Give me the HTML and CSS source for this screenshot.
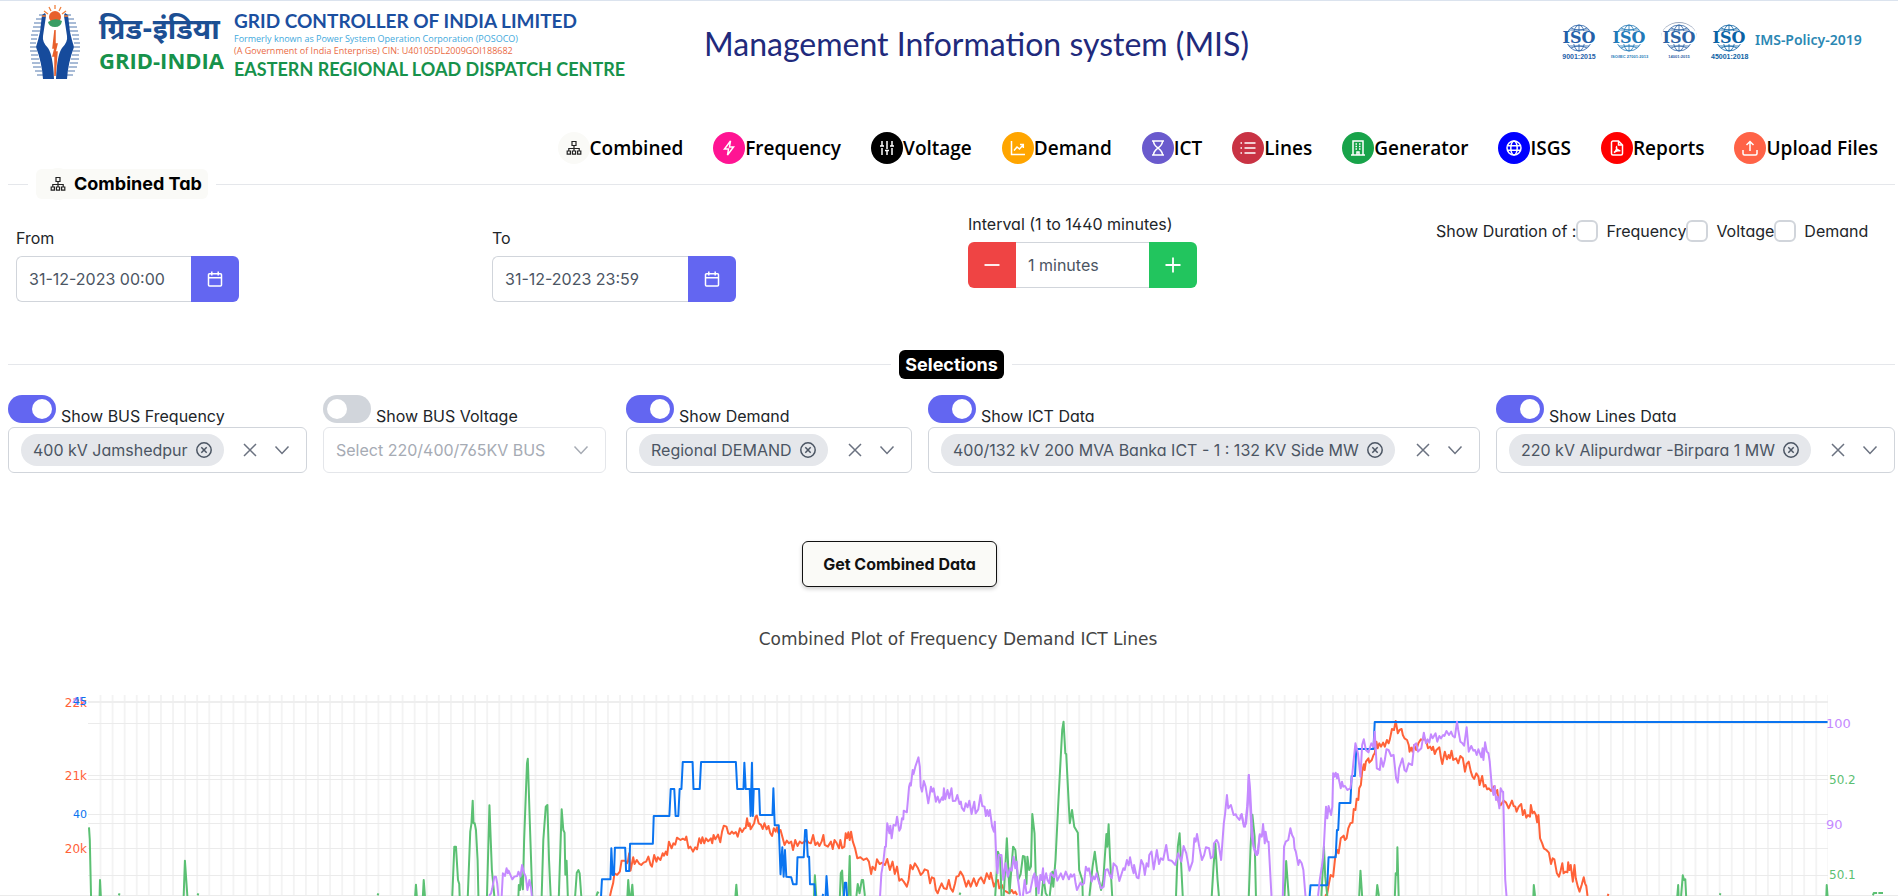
FILE: index.html
```html
<!DOCTYPE html>
<html lang="en">
<head>
<meta charset="utf-8">
<title>Management Information system (MIS)</title>
<link rel="stylesheet" href="styles.css">
</head>
<body>
<svg class="sprite" aria-hidden="true">
  <symbol id="i-sitemap" viewBox="0 0 16 16"><path d="M6 1.5h4v4H6zM8 5.500v3M2.800 11V8.500h10.400V11M8 8.500V11M1.200 11h3.200v3.200H1.200zM6.400 11h3.200v3.200H6.400zM11.600 11h3.200v3.200h-3.200z"/></symbol>
  <symbol id="i-bolt" viewBox="0 0 16 16"><path d="M9.500 1 3.500 9h4l-1 6 6-8h-4z"/></symbol>
  <symbol id="i-sliders" viewBox="0 0 16 16"><path d="M3 1v5M3 8v7M1 6h4M8 1v8M8 11v4M6 10.500h4M13 1v5M13 8v7M11 6h4"/></symbol>
  <symbol id="i-chart" viewBox="0 0 16 16"><path d="M1.500 1v13.500H15M4 10.500l3-3.500 2.500 2L13 5M10 4.500h3.300V8"/></symbol>
  <symbol id="i-hourglass" viewBox="0 0 16 16"><path d="M2 1h12M2 15h12M3.500 1c0 4 2.500 5.500 4.500 7-2 1.500-4.500 3-4.500 7M12.500 1c0 4-2.500 5.500-4.500 7 2 1.500 4.500 3 4.500 7"/></symbol>
  <symbol id="i-list" viewBox="0 0 16 16"><path d="M4.500 3h11M4.500 8h11M4.500 13h11M.5 3H2M.5 8H2M.5 13H2"/></symbol>
  <symbol id="i-building" viewBox="0 0 16 16"><path d="M3 15V1h10v14M1 15h14M7 15v-3h2v3M5.500 4h1.500M9 4h1.500M5.500 6.500h1.500M9 6.500h1.500M5.500 9h1.500M9 9h1.500"/></symbol>
  <symbol id="i-globe" viewBox="0 0 16 16"><circle cx="8" cy="8" r="7"/><ellipse cx="8" cy="8" rx="3.200" ry="7"/><path d="M1.500 5.700h13M1.500 10.300h13"/></symbol>
  <symbol id="i-pdf" viewBox="0 0 16 16"><path d="M9.500 1H4a1.500 1.500 0 0 0-1.500 1.500v11A1.500 1.500 0 0 0 4 15h8a1.500 1.500 0 0 0 1.500-1.500V5zM9.500 1v4h4M5 12.500c2-1 3-4 2.500-5.500-.8 1 1.500 4 3.800 3.700-2-.4-4 .2-6.300 1.800z"/></symbol>
  <symbol id="i-upload" viewBox="0 0 16 16"><path d="M8 11V1.500M4.500 5 8 1.500 11.500 5M1 10v3.500A1.500 1.500 0 0 0 2.500 15h11a1.500 1.500 0 0 0 1.500-1.500V10"/></symbol>
  <symbol id="i-calendar" viewBox="0 0 16 16"><path d="M2.500 2.700h11a1 1 0 0 1 1 1v10.300a1 1 0 0 1-1 1h-11a1 1 0 0 1-1-1V3.700a1 1 0 0 1 1-1zM1.500 6.700h13M4.800.5v4M11.200.5v4"/></symbol>
  <symbol id="i-minus" viewBox="0 0 16 16"><path d="M.5 8h15"/></symbol>
  <symbol id="i-plus" viewBox="0 0 16 16"><path d="M.5 8h15M8 .5v15"/></symbol>
  <symbol id="i-times" viewBox="0 0 16 16"><path d="M2 2l12 12M14 2 2 14"/></symbol>
  <symbol id="i-down" viewBox="0 0 16 16"><path d="M1.500 4.500 8 11.500l6.500-7"/></symbol>
  <symbol id="i-remove" viewBox="0 0 16 16"><circle cx="8" cy="8" r="7.200"/><path d="M5.300 5.300l5.400 5.400M10.700 5.300l-5.400 5.400"/></symbol>
  <symbol id="i-iso" viewBox="0 0 34 30"><g fill="none" stroke="currentColor" stroke-width=".8"><circle cx="17" cy="15" r="13"/><ellipse cx="17" cy="15" rx="6" ry="13"/><path d="M17 2v26M7 7h20M7 23h20M9 5q8 4 16 0M9 25q8-4 16 0"/></g><path d="M0 8h34v13H0z" fill="#fff" stroke="none"/></symbol>
</svg>

<header class="banner">
  <div class="brand">
    <svg class="emblem" viewBox="0 0 50 74" aria-hidden="true">
      <g stroke="#5378ae" stroke-width="1"><path d="M9 10h7M6 14h9M4 18h9M3 22h8M2 26h8M1 30h7M1 34h6M0 38h6M0 42h6M0 46h7M1 50h7M1 54h8M2 58h8M3 62h8M5 66h7M7 70h6M34 10h7M35 14h9M37 18h9M39 22h8M40 26h8M42 30h7M43 34h6M44 38h6M44 42h6M43 46h7M42 50h7M41 54h8M40 58h8M39 62h8M38 66h7M37 70h6"/></g>
      <path d="M12 10l3-2 1 3-3 20q-1 6 5 12 5 7 6 31H13Q12 58 6 42 8 36 10 27zM38 10l-3-2-1 3 3 20q1 6-5 12-5 7-6 31h11q1-16 7-32-2-6-4-15z" fill="#164b9c"/>
      <circle cx="25" cy="12" r="6" fill="#e8602c"/>
      <path d="M25 0v4M19 2l2 4M31 2l-2 4M14 6l4 3M36 6l-4 3M12 11h4M34 11h4" stroke="#f0813e" stroke-width="1.300"/>
      <path d="M18 17q7-5 14-1-1 6-7 6t-7-5z" fill="#3a9d64"/>
      <path d="M25 25l-2 18h2l-2 8h2l0 20 2-24h-2l2-8h-2z" fill="#e8602c" stroke="#e8602c"/>
    </svg>
    <div class="brand-name"><span class="hindi" lang="hi">ग्रिड-इंडिया</span><span class="latin">GRID-INDIA</span></div>
    <div class="org">
      <span class="org-main">GRID CONTROLLER OF INDIA LIMITED</span>
      <span class="org-former">Formerly known as Power System Operation Corporation (POSOCO)</span>
      <span class="org-cin">(A Government of India Enterprise) CIN: U40105DL2009GOI188682</span>
      <span class="org-centre">EASTERN REGIONAL LOAD DISPATCH CENTRE</span>
    </div>
  </div>
  <h1 class="title">Management Information system (MIS)</h1>
  <div class="certs">
    <div class="iso"><span class="mark"><svg><use href="#i-iso"/></svg><b>ISO</b></span><small>9001:2015</small></div>
    <div class="iso mid"><span class="mark"><svg><use href="#i-iso"/></svg><b>ISO</b></span><small class="tiny">ISO/IEC 27001:2013</small></div>
    <div class="iso ring"><span class="mark"><svg><use href="#i-iso"/></svg><b>ISO</b></span><small class="tiny">14001:2015</small></div>
    <div class="iso deep"><span class="mark"><svg><use href="#i-iso"/></svg><b>ISO</b></span><small>45001:2018</small></div>
    <a class="policy" href="#">IMS-Policy-2019</a>
  </div>
</header>

<nav class="tabs">
  <a href="#" class="tab first"><span class="dot pale"><svg><use href="#i-sitemap"/></svg></span>Combined</a>
  <a href="#" class="tab"><span class="dot pink"><svg><use href="#i-bolt"/></svg></span>Frequency</a>
  <a href="#" class="tab"><span class="dot black"><svg><use href="#i-sliders"/></svg></span>Voltage</a>
  <a href="#" class="tab"><span class="dot amber"><svg><use href="#i-chart"/></svg></span>Demand</a>
  <a href="#" class="tab"><span class="dot violet"><svg><use href="#i-hourglass"/></svg></span>ICT</a>
  <a href="#" class="tab"><span class="dot crimson"><svg><use href="#i-list"/></svg></span>Lines</a>
  <a href="#" class="tab"><span class="dot green"><svg><use href="#i-building"/></svg></span>Generator</a>
  <a href="#" class="tab"><span class="dot blue"><svg><use href="#i-globe"/></svg></span>ISGS</a>
  <a href="#" class="tab"><span class="dot red"><svg><use href="#i-pdf"/></svg></span>Reports</a>
  <a href="#" class="tab"><span class="dot tomato"><svg><use href="#i-upload"/></svg></span>Upload Files</a>
</nav>

<main>
  <div class="divider left"><h2 class="tab-title"><span class="dot pale"><svg><use href="#i-sitemap"/></svg></span>Combined Tab</h2></div>

  <form class="filters">
    <div class="field date">
      <label for="from">From</label>
      <div class="group from"><input id="from" type="text" value="31-12-2023 00:00"><button type="button" class="act indigo" aria-label="Choose date"><svg><use href="#i-calendar"/></svg></button></div>
    </div>
    <div class="field date">
      <label for="to">To</label>
      <div class="group to"><input id="to" type="text" value="31-12-2023 23:59"><button type="button" class="act indigo" aria-label="Choose date"><svg><use href="#i-calendar"/></svg></button></div>
    </div>
    <div class="field">
      <label for="interval">Interval (1 to 1440 minutes)</label>
      <div class="group step"><button type="button" class="act minus" aria-label="Decrease"><svg><use href="#i-minus"/></svg></button><input id="interval" type="text" value="1 minutes"><button type="button" class="act plus" aria-label="Increase"><svg><use href="#i-plus"/></svg></button></div>
    </div>
    <div class="durations">
      <span>Show Duration of :</span>
      <input type="checkbox" id="d-f"><label for="d-f">Frequency</label>
      <input type="checkbox" id="d-v"><label for="d-v">Voltage</label>
      <input type="checkbox" id="d-d"><label for="d-d">Demand</label>
    </div>
  </form>

  <div class="divider"><h2 class="badge">Selections</h2></div>

  <section class="selections">
    <div class="pick">
      <div class="switch-row"><input type="checkbox" class="switch" id="s1" checked><label for="s1">Show BUS Frequency</label></div>
      <div class="multi"><span class="chip">400 kV Jamshedpur<button type="button" aria-label="Remove"><svg><use href="#i-remove"/></svg></button></span><button type="button" class="clear" aria-label="Clear"><svg><use href="#i-times"/></svg></button><button type="button" aria-label="Open list"><svg><use href="#i-down"/></svg></button></div>
    </div>
    <div class="pick">
      <div class="switch-row"><input type="checkbox" class="switch" id="s2"><label for="s2">Show BUS Voltage</label></div>
      <div class="multi off"><select disabled aria-label="BUS Voltage"><option>Select 220/400/765KV BUS</option></select><svg><use href="#i-down"/></svg></div>
    </div>
    <div class="pick">
      <div class="switch-row"><input type="checkbox" class="switch" id="s3" checked><label for="s3">Show Demand</label></div>
      <div class="multi"><span class="chip">Regional DEMAND<button type="button" aria-label="Remove"><svg><use href="#i-remove"/></svg></button></span><button type="button" class="clear" aria-label="Clear"><svg><use href="#i-times"/></svg></button><button type="button" aria-label="Open list"><svg><use href="#i-down"/></svg></button></div>
    </div>
    <div class="pick">
      <div class="switch-row"><input type="checkbox" class="switch" id="s4" checked><label for="s4">Show ICT Data</label></div>
      <div class="multi"><span class="chip">400/132 kV 200 MVA Banka ICT - 1 : 132 KV Side MW<button type="button" aria-label="Remove"><svg><use href="#i-remove"/></svg></button></span><button type="button" class="clear" aria-label="Clear"><svg><use href="#i-times"/></svg></button><button type="button" aria-label="Open list"><svg><use href="#i-down"/></svg></button></div>
    </div>
    <div class="pick">
      <div class="switch-row"><input type="checkbox" class="switch" id="s5" checked><label for="s5">Show Lines Data</label></div>
      <div class="multi"><span class="chip">220 kV Alipurdwar -Birpara 1 MW<button type="button" aria-label="Remove"><svg><use href="#i-remove"/></svg></button></span><button type="button" class="clear" aria-label="Clear"><svg><use href="#i-times"/></svg></button><button type="button" aria-label="Open list"><svg><use href="#i-down"/></svg></button></div>
    </div>
  </section>

  <div class="submit"><button type="button">Get Combined Data</button></div>

  <h3 class="plot-title">Combined Plot of Frequency Demand ICT Lines</h3>
</main>

<svg class="plot" viewBox="0 0 1898 216" role="img" aria-label="Combined plot">
  <defs><pattern id="cols" x="94" y="0" width="12.083" height="216" patternUnits="userSpaceOnUse"><path d="M6.500 0V216" stroke="#e9e9e9"/></pattern></defs>
  <path d="M94 15H1828V216H94z" fill="url(#cols)"/>
  <path d="M88 22H1828" stroke="#eee" stroke-width="2"/>
  <path d="M88 43.500H1828M88 95.500H1828M88 99.500H1828M88 134.500H1828M88 143.500H1828M88 168.500H1828M88 195.500H1828M0 215.500H1898" stroke="#ebebeb"/>

  <g class="line orange">
    <path transform="translate(560) scale(.4464 .3333)" d="M112 648L115 630 119 610 122 580 128 585 134 575 138 542 146 542 150 550 152 545 155 520 158 572 164 532 167 552 172 540 178 552 182 555 187 548 193 545 198 530 203 555 206 560 211 525 216 545 219 532 225 540 230 520 233 527 237 515 240 525 244 485 250 505 254 490 258 494 262 473 270 480 275 476 280 480 283 470 288 505 292 500 298 515 303 502 307 508 312 475 316 490 319 472 323 490 327 475 332 484 338 475 341 490 344 465 348 478 354 464 359 487 363 455 367 437 373 440 377 460 381 462 385 455 389 461 394 456 398 470 403 445 408 456 413 445 416 444 419 415 422 438 425 430 427 448 435 430 438 410 441 407 445 430 450 434 454 447 458 430 463 448 467 438 471 460 475 468 479 445 483 455 486 442 489 458 494 450 499 475 503 495 508 482 513 490 518 485 522 510 527 480 532 498 537 485 542 490 548 485 552 480 557 488 562 490 567 465 572 495 577 487 581 498 586 485 590 465 593 495 600 500 607 485 611 507 615 480 620 490 625 505 628 480 632 505 637 500 640 460 643 475 646 457 649 480 652 455 656 485 661 505 666 535 673 532 680 540 687 535 692 545 697 582 700 560 706 570 710 538 716 552 722 548 728 555 733 537 739 570 745 545 750 582 755 560 760 602 765 597 770 605 777 620 781 600 785 555 790 568 795 550 802 565 808 585 813 578 817 568 824 572 829 610 833 592 838 595 842 630 846 640 850 625 855 610 860 625 866 627 871 600 875 625 880 635 885 610 888 590 893 588 897 575 903 588 910 620 915 602 920 620 927 595 933 618 938 600 943 592 950 610 956 580 962 597 965 578 972 620 977 605 981 600 984 625 990 615 995 632 1000 635 1006 640 1012 630 1016 640 1020 635 1024 645"/>
    <path transform="translate(1240) scale(.4197 .3333)" d="M203 648L208 640 212 610 216 585 222 590 227 530 232 510 235 520 240 475 247 467 250 480 254 475 258 445 263 430 268 428 271 387 275 390 278 356 282 360 284 325 288 315 291 275 295 253 297 270 300 245 306 235 308 248 314 240 318 225 321 220 325 185 328 205 332 190 336 200 341 188 345 200 350 180 354 190 357 178 362 147 367 150 371 123 376 160 380 150 385 147 388 165 392 175 398 180 402 195 404 215 408 203 411 215 415 195 420 210 425 190 431 178 435 180 440 175 445 190 448 205 453 200 457 210 460 200 464 222 468 210 475 202 479 235 482 252 488 215 493 238 497 225 500 235 504 212 508 240 515 235 520 250 525 228 531 235 536 275 540 252 545 245 550 275 554 290 558 297 563 280 568 290 571 315 577 288 581 320 585 315 589 328 593 325 598 333 602 325 606 318 609 340 613 330 616 365 621 376 628 362 634 368 640 385 648 362 652 378 656 380 659 395 664 380 670 372 674 405 678 390 682 413 686 405 691 410 693 375 697 400 701 395 705 405 708 427 711 405 715 475 720 490 724 505 730 510 736 518 741 552 745 535 749 538 755 580 760 590 764 572 768 550 771 580 776 575 780 577 782 547 785 570 788 555 793 605 797 555 800 595 805 620 809 635 814 615 819 592 822 610 825 618 828 648M876 648L878 642"/>
  </g>
  <g class="line green">
    <path transform="scale(.4082 .3333)" d="M218 442L220 480 223 648M244 648L245 600 247 648M291 646L293 640M450 648L453 542 459 648M484 646L486 640M925 646L927 640M1017 648L1019 614 1021 648M1036 648L1038 600 1041 648M1108 648L1113 500 1117 500 1122 600 1125 612 1126 648M1146 648L1152 455 1155 430 1158 362 1160 430 1163 430 1166 450 1170 540 1172 648M1193 648L1199 376 1205 570 1211 648M1270 648L1271 615 1274 630 1276 580 1281 628 1284 480 1291 250 1293 236 1298 430 1304 648M1327 648L1331 480 1337 380 1341 375 1345 540 1349 648M1369 648L1376 388 1380 450 1383 458 1385 584 1388 542 1391 648M1409 648L1413 578 1417 570 1420 580 1424 648M1461 648L1464 637 1467 640M1537 648L1539 600 1542 648M1546 648L1549 614 1551 648"/>
    <path transform="translate(560) scale(.4464 .3333)" d="M393 648L395 614 397 648M569 648L571 586 574 648M627 648L629 580 632 572 635 648M646 648L649 528 651 648M664 648L667 612 671 640 676 600 679 600 683 648M895 645L897 638M975 648L981 515 986 535 989 648M994 648L1001 475 1007 640 1015 500 1020 510 1026 600 1032 582 1037 528 1041 530 1045 612 1047 530 1051 570 1055 560 1058 402 1063 460 1067 648M1079 648L1083 590 1088 640 1092 648M1097 648L1103 575 1105 620 1110 540 1117 350 1125 150 1128 125 1132 220 1134 222 1140 380 1142 430 1147 390 1152 440 1160 458 1163 570 1170 600 1171 648M1186 648L1193 560 1198 515 1203 570 1212 630 1217 600 1224 462 1226 500 1229 433 1232 530 1237 648M1380 648L1384 500 1388 460 1395 648M1460 648L1464 560 1468 490 1473 600 1476 648M1543 648L1547 500 1551 404 1556 470 1559 648"/>
    <path transform="translate(1240) scale(.4197 .3333)" d="M106 648L110 543 116 648M194 648L200 500 203 590 208 648M284 648L287 572 291 648M325 648L327 615 331 648M369 648L371 580 374 585 375 502 378 648M699 648L700 615 703 648M1042 648L1044 615 1045 648M1051 648L1055 586 1058 600 1061 598 1063 648M1143 645L1145 640M1397 648L1398 615 1400 648M1508 646L1510 639 1518 639M1521 639L1532 639"/>
  </g>
  <g class="line blue">
    <path transform="translate(560) scale(.4464 .3333)" d="M92 648L94 598 113 598 115 505 118 585 121 585 123 503 146 503 148 573 155 573 157 491 208 491 210 408 245 408 248 327 256 327 259 408 265 408 268 327 272 327 275 246 297 246 299 327 313 327 316 246 394 246 397 327 411 327 413 248 416 327 425 327 427 408 430 248 432 408 434 327 446 327 448 405 476 405 478 325 481 436 490 436 494 583 498 502 501 590 504 510 507 590 518 592 522 613 530 613 532 532 546 532 549 450 552 450 555 530 558 530 560 613 570 613 572 648M588 648L590 642M595 648L597 588 600 648M636 648L638 608 641 608 643 648"/>
    <path transform="translate(1240) scale(.4197 .3333)" d="M166 648L168 616 208 616 211 532 228 532 231 450 234 450 237 369 263 369 266 288 274 288 277 207 318 207 321 126 1400 126"/>
  </g>
  <g class="line purple">
    <path transform="scale(.4082 .3333)" d="M1198 648L1203 640 1206 625 1211 590 1215 590 1218 610 1221 648M1229 648L1232 580 1237 588 1241 565 1244 580 1246 572 1255 598 1260 590 1267 588 1270 575 1275 590 1279 555 1284 580 1288 590 1292 630 1297 600 1301 625 1303 648"/>
    <path transform="translate(560) scale(.4464 .3333)" d="M717 648L720 580 724 550 728 500 730 500 733 430 738 460 740 437 743 475 747 435 752 437 755 410 760 452 763 445 766 415 769 418 770 392 777 397 782 320 784 310 786 317 790 270 792 282 796 260 803 232 806 260 808 320 811 335 815 303 819 320 825 370 831 320 834 335 837 325 842 365 846 350 850 368 856 352 858 360 860 325 863 358 868 330 872 355 877 325 880 363 886 362 890 345 895 372 898 365 900 383 905 393 909 370 913 382 917 362 922 402 928 365 931 400 937 388 942 345 946 378 951 380 954 408 957 390 960 408 963 390 968 440 972 455 974 425 978 560 980 580 983 525 989 525 993 600 998 550 1003 590 1008 565 1012 572 1016 530 1020 565 1023 545 1026 600 1031 648M1037 648L1041 600 1045 640 1053 635 1060 590 1063 580 1066 620 1069 590 1072 640 1076 585 1079 600 1082 565 1084 610 1089 580 1092 600 1096 610 1099 580 1103 585 1107 592 1110 570 1114 602 1122 580 1127 598 1133 575 1140 598 1144 583 1147 590 1152 583 1155 610 1158 630 1166 608 1169 615 1174 610 1178 560 1182 572 1185 565 1191 605 1195 590 1198 598 1202 580 1207 605 1212 625 1218 620 1222 570 1227 568 1233 590 1236 595 1240 550 1247 560 1253 603 1262 565 1265 570 1270 540 1274 556 1277 532 1281 560 1285 580 1286 555 1292 592 1296 595 1302 540 1307 555 1310 585 1314 550 1318 560 1320 525 1325 515 1330 568 1337 510 1342 552 1346 535 1351 540 1358 495 1363 540 1370 542 1378 555 1385 520 1392 545 1397 498 1403 520 1410 572 1417 545 1421 475 1424 485 1427 462 1432 500 1438 540 1443 525 1447 502 1454 505 1458 535 1463 530 1465 490 1471 480 1475 490 1481 540 1487 430 1490 400 1494 345 1497 385 1503 375 1509 405 1514 403 1516 410 1522 420 1527 403 1532 440 1537 430 1541 370 1543 285 1546 330 1550 440 1554 500 1559 515 1562 525 1568 460"/>
    <path transform="translate(1240) scale(.4197 .3333)" d="M0 410L4 402 8 430 12 440 17 380 21 285 24 370 28 470 33 505 38 525 43 520 47 465 52 470 55 432 59 490 61 455 65 485 68 485 75 648M102 648L105 500 109 485 115 480 120 445 124 465 128 475 130 505 133 515 139 555 142 540 147 550 151 570 156 648M186 648L190 600 195 560 199 520 203 420 205 380 208 415 211 378 217 405 220 380 222 280 225 290 228 278 231 295 233 282 240 325 243 305 246 320 250 318 256 330 263 325 267 290 270 250 275 190 281 220 287 290 291 195 295 178 300 210 306 217 313 190 318 200 321 155 323 200 326 265 333 270 336 235 341 260 345 240 349 208 354 210 360 228 366 225 372 295 376 308 379 265 387 235 392 270 396 275 402 250 410 255 415 195 420 190 424 215 432 205 438 158 443 190 447 178 451 188 455 163 459 175 466 160 470 185 475 168 479 175 484 165 487 168 492 153 498 165 503 155 507 168 512 172 517 125 520 150 525 185 530 190 534 197 540 142 545 215 551 198 556 212 560 210 564 225 568 208 575 232 578 205 580 240 584 187 588 215 592 220 595 245 600 320 604 345 607 318 610 360 614 350 618 385 621 325 625 335 627 335 629 450 632 600 635 648"/>
  </g>
  <g class="ticks">
    <text class="t-orange end" x="87" y="27">22k</text><text class="t-purple small end" x="86" y="25">45</text><text class="t-blue small end" x="87" y="25">45</text>
    <text class="t-orange end" x="87" y="100">21k</text><text class="t-blue small end" x="87" y="138">40</text><text class="t-orange end" x="87" y="173">20k</text>
    <text class="t-purple big" x="1826" y="48">100</text><text class="t-green" x="1829" y="104">50.2</text>
    <text class="t-purple big" x="1826" y="149">90</text><text class="t-green" x="1829" y="199">50.1</text>
  </g>
</svg>
</body>
</html>
```
FILE: styles.css
```css
* { box-sizing: border-box; }
body {
  margin: 0;
  overflow-x: hidden;
  border-top: 1px solid #dbe3ee;
  background: #fff;
  color: #212529;
  font: 16px/24px Inter, "Noto Sans", sans-serif;
  font-feature-settings: "cv02", "cv03", "cv04", "cv11";
}
h1, h2, h3 { margin: 0; }
a { color: inherit; text-decoration: none; }
button, input, select { font: inherit; font-feature-settings: inherit; }
button { border: 0; padding: 0; background: none; color: inherit; cursor: pointer; }
.sprite { display: none; }
svg { display: block; fill: none; stroke: currentColor; stroke-width: 1.5; }
svg use { overflow: visible; }

.banner {
  display: grid;
  grid-template-columns: 704fr 857fr 337fr;
  align-items: start;
  height: 114px;
}
.brand { display: flex; padding: 4px 0 0 30px; }
.emblem { width: 50px; height: 74px; flex: none; margin-right: 19px; stroke: none; }
.brand-name { display: flex; flex-direction: column; width: 124px; margin-right: 11px; padding-top: 10px; white-space: nowrap; font-weight: 700; }
.hindi { font-family: "Noto Sans Devanagari", "Noto Sans", sans-serif; font-size: 29px; line-height: 34px; color: #1c4f93; }
.latin { font-family: "Open Sans", sans-serif; font-size: 22px; line-height: 22px; color: #17924b; }
.org { display: flex; flex-direction: column; white-space: nowrap; font-family: "Open Sans", sans-serif; }
.org-main { padding-top: 3px; font: 700 19px/25px Lato, sans-serif; color: #1b4fa0; }
.org-former { font-size: 9px; line-height: 12px; color: #3fa9dc; }
.org-cin { font-size: 9px; line-height: 12px; color: #ea6b45; }
.org-centre { font: 700 18px/24px Lato, sans-serif; color: #17924b; }
.title { padding-top: 22px; font: 400 32px/42px Lato, sans-serif; color: #212a7c; white-space: nowrap; }
.certs { display: flex; align-items: flex-start; gap: 14px; padding-top: 21px; }
.iso { width: 36px; color: #2460a8; text-align: center; }
.iso.mid { color: #2279b8; }
.iso.ring { color: #2b62a4; }
.iso.ring .mark { border-top: 1px solid #9aa7bd; border-radius: 50%; }
.iso.deep { color: #0b62a4; }
.mark { display: grid; height: 31px; place-items: center; }
.mark > * { grid-area: 1 / 1; }
.mark svg { width: 34px; height: 30px; }
.mark b { position: relative; font: 700 16px/16px "DejaVu Serif", serif; }
.iso small { display: block; font: 700 7px/8px "Liberation Sans", sans-serif; white-space: nowrap; }
.iso small.tiny { font-size: 4px; }
.policy { margin-left: -6px; padding-top: 8px; font: 600 14px/20px "Noto Sans", sans-serif; color: #2b87b3; white-space: nowrap; }

.tabs { display: flex; justify-content: flex-end; gap: 30px; padding: 17px 20px 0 0; }
.tab { display: flex; align-items: center; font: 600 19px/32px "Open Sans", sans-serif; color: #000; white-space: nowrap; }
.dot { display: grid; place-items: center; width: 32px; height: 32px; border-radius: 50%; color: #fff; }
.dot svg { width: 16px; height: 16px; }
.pale { background: #fafaf7; color: #222; }
.pale svg { stroke-width: 1.2; }
.pink { background: #ff1493; }
.black { background: #000; }
.amber { background: #ffa500; }
.violet { background: #6a5acd; }
.crimson { background: #c93344; }
.green.dot { background: #18a34a; }
.blue.dot { background: #00f; }
.red { background: #f00; }
.tomato { background: #ff6347; }

main { padding: 0 3px 0 8px; }
.divider { display: flex; align-items: center; gap: 8px; height: 40px; }
.divider::before, .divider::after { content: ""; flex: 1; border-top: 1px solid #e5e7eb; }
.divider.left::before { flex: 0 0 20px; }
.tab-title { display: flex; align-items: center; height: 30px; padding: 0 6px; border-radius: 6px; background: #fafaf7; font-size: 18px; font-weight: 700; color: #000; }
.badge { height: 29px; padding: 0 6px; border-radius: 6px; background: #000; color: #fff; font-size: 18px; line-height: 29px; font-weight: 700; }

.filters { display: grid; grid-template-columns: 476fr 476fr 468fr 459fr; padding: 8px 0 0 8px; }
.field { display: flex; flex-direction: column; gap: 6px; }
.field.date { padding-top: 14px; }
.group { display: flex; height: 46px; }
.from { width: 223px; }
.to { width: 244px; }
.step { width: 229px; }
.group input { flex: 1; min-width: 0; padding: 0 12px; border: 1px solid #d1d5db; border-radius: 6px 0 0 6px; color: #4b5563; }
.group input { border-right: 0; }
.step input { border-left: 0; border-radius: 0; }
.act { display: grid; flex: none; place-items: center; width: 48px; color: #fff; border-radius: 0 6px 6px 0; }
.act svg { width: 16px; height: 16px; }
.indigo { background: #6366f1; }
.minus { background: #ef4444; border-radius: 6px 0 0 6px; }
.plus { background: #22c55e; }
.minus svg, .plus svg { stroke-width: 1.8; }
.durations { display: flex; align-items: center; height: 24px; margin-top: 7px; white-space: nowrap; }
.durations input { appearance: none; flex: none; width: 22px; height: 22px; margin: 0 8px 0 0; border: 2px solid #d1d5db; border-radius: 6px; background: #fff; }

.filters + .divider { margin-top: 42px; }
.selections { display: grid; grid-template-columns: 299fr 287fr 286fr 552fr 399fr; gap: 16px; padding-top: 11px; }
.switch-row { display: flex; align-items: flex-start; height: 32px; }
.switch-row label { padding: 10px 0 0 5px; line-height: 22px; white-space: nowrap; }
.switch { appearance: none; flex: none; width: 48px; height: 28px; margin: 0; padding: 4px; border-radius: 14px; background: #d1d5db; }
.switch::before { content: ""; display: block; width: 20px; height: 20px; border-radius: 50%; background: #fff; }
.switch:checked { background: #6366f1; }
.switch:checked::before { margin-left: 20px; }
.multi { display: flex; align-items: center; height: 46px; padding: 0 16px 0 12px; border: 1px solid #d1d5db; border-radius: 6px; color: #6b7280; }
.multi svg { width: 16px; height: 16px; }
.multi .clear { margin: 0 16px 0 auto; }
.chip { display: flex; align-items: center; gap: 8px; height: 32px; padding: 0 12px; border-radius: 16px; background: #e5e7eb; color: #4b5563; white-space: nowrap; }
.off { margin-right: 4px; border-color: #e4e6ea; color: #a6abb4; }
.off select { flex: 1; min-width: 0; appearance: none; padding: 0; border: 0; background: none; color: #a6abb4; opacity: 1; }

.submit { display: flex; justify-content: center; padding: 68px 104px 0 0; }
.submit button { height: 46px; padding: 0 20px; border: 1px solid #111; border-radius: 6px; background: #fafaf7; color: #111; font-weight: 700; box-shadow: 0 2px 4px #0003; }
.plot-title { padding: 40px 0 29px 13px; font: 400 17px/24px "DejaVu Sans", sans-serif; color: #444; text-align: center; }

.plot { width: 100%; height: auto; stroke: none; stroke-width: 1; }
.line path { stroke-width: 2; stroke-linejoin: round; vector-effect: non-scaling-stroke; }
.line.orange { stroke: #ff6238; }
.line.green { stroke: #5bc073; }
.line.blue { stroke: #0a74f0; }
.line.purple { stroke: #c58aff; }
.ticks { font: 12px "DejaVu Sans", sans-serif; }
.end { text-anchor: end; }
.small { font-size: 11px; }
.big { font-size: 13px; }
.t-orange { fill: #ff6238; }
.t-green { fill: #5bc073; }
.t-blue { fill: #0a74f0; }
.t-purple { fill: #c58aff; }
```
